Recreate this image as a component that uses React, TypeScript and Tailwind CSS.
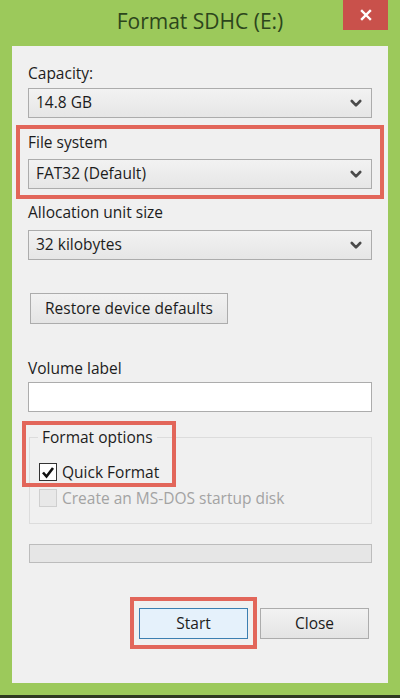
import React from "react";

const font = { fontFamily: '"Open Sans", "Noto Sans", "Liberation Sans", sans-serif' };

function Chevron() {
  return (
    <svg width="12" height="9" viewBox="0 0 12 9" className="shrink-0">
      <path d="M1.8 2 L6 6.3 L10.2 2" fill="none" stroke="#4a4a4a" strokeWidth="2.6" strokeLinecap="round" strokeLinejoin="round" />
    </svg>
  );
}

function Select({ value }: { value: string }) {
  return (
    <div className="flex h-[30px] items-center justify-between border border-[#acacac] bg-gradient-to-b from-[#f2f2f2] to-[#e6e6e6] pl-[7px] pr-[9px] text-[15.5px] text-[#1c1c1c]">
      <span>{value}</span>
      <Chevron />
    </div>
  );
}

export default function App() {
  return (
    <div style={font} className="flex h-[698px] w-[400px] flex-col overflow-hidden bg-[#9cc95b]">
      {/* title bar */}
      <div className="relative flex h-[46px] shrink-0 items-center justify-center">
        <span className="pb-[2px] text-[21px] text-[#2c461c]">Format SDHC (E:)</span>
        <div className="absolute right-[12px] top-0 flex h-[30px] w-[45px] items-center justify-center bg-[#c9514b]">
          <svg width="12" height="12" viewBox="0 0 12 12">
            <path d="M2 2 L10 10 M10 2 L2 10" stroke="#fff" strokeWidth="2.4" strokeLinecap="square" />
          </svg>
        </div>
      </div>

      {/* body */}
      <div className="mx-[12px] flex h-[637px] shrink-0 flex-col bg-[#f0f0f0] px-[16px] text-[15.5px] text-[#1c1c1c]">
        <div className="mt-[17px] h-[20px] leading-[20px]">Capacity:</div>
        <div className="mt-[5px]">
          <Select value="14.8 GB" />
        </div>

        <div className="relative mt-[14px]">
          <div className="h-[20px] leading-[20px]">File system</div>
          <div className="mt-[7px]">
            <Select value="FAT32 (Default)" />
          </div>
          <div className="pointer-events-none absolute -bottom-[10px] -left-[12px] -right-[12px] -top-[7px] border-4 border-[#e2665a]" />
        </div>

        <div className="mt-[13px] h-[20px] leading-[20px]">Allocation unit size</div>
        <div className="mt-[8px]">
          <Select value="32 kilobytes" />
        </div>

        <div className="ml-[2px] mt-[33px] flex h-[31px] w-[198px] items-center justify-center border border-[#acacac] bg-gradient-to-b from-[#f2f2f2] to-[#e4e4e4]">
          Restore device defaults
        </div>

        <div className="mt-[34px] h-[20px] leading-[20px]">Volume label</div>
        <div className="mt-[4px] h-[30px] border border-[#acacac] bg-white" />

        {/* group box */}
        <div className="relative ml-[1px] mt-[25px] h-[87px] border border-[#dcdcdc]">
          <div className="absolute -top-[11px] left-[8px] bg-[#f0f0f0] px-[4px] leading-[20px]">Format options</div>
          <div className="ml-[9px] mt-[24px] flex items-center gap-[5px]">
            <div className="flex h-[18px] w-[18px] items-center justify-center border border-[#333] bg-white">
              <svg width="14" height="13" viewBox="0 0 14 13">
                <path d="M2 6.5 L5.5 10.5 L12 2" fill="none" stroke="#111" strokeWidth="2.6" strokeLinejoin="miter" />
              </svg>
            </div>
            <span className="leading-[20px]">Quick Format</span>
          </div>
          <div className="ml-[9px] mt-[6px] flex items-center gap-[5px]">
            <div className="h-[18px] w-[18px] border border-[#cfcfcf] bg-[#e8e8e8]" />
            <span className="leading-[20px] text-[#a3a3a3]">Create an MS-DOS startup disk</span>
          </div>
          <div className="pointer-events-none absolute -left-[8px] -top-[17px] h-[66px] w-[154px] border-4 border-[#e2665a]" />
        </div>

        <div className="ml-[1px] mt-[20px] h-[19px] border border-[#bcbcbc] bg-[#e6e6e6]" />

        <div className="mr-[3px] mt-[45px] flex justify-end gap-[12px]">
          <div className="relative">
            <div className="flex h-[31px] w-[109px] items-center justify-center border border-[#3c7fb1] bg-[#e5f1fb]">
              Start
            </div>
            <div className="pointer-events-none absolute -bottom-[10px] -left-[9px] -right-[9px] -top-[11px] border-4 border-[#e2665a]" />
          </div>
          <div className="flex h-[31px] w-[109px] items-center justify-center border border-[#acacac] bg-gradient-to-b from-[#f2f2f2] to-[#e4e4e4]">
            Close
          </div>
        </div>
      </div>
      <div className="h-[12px] shrink-0" />
      <div className="flex-1 bg-[#2f3a22]" />
    </div>
  );
}
